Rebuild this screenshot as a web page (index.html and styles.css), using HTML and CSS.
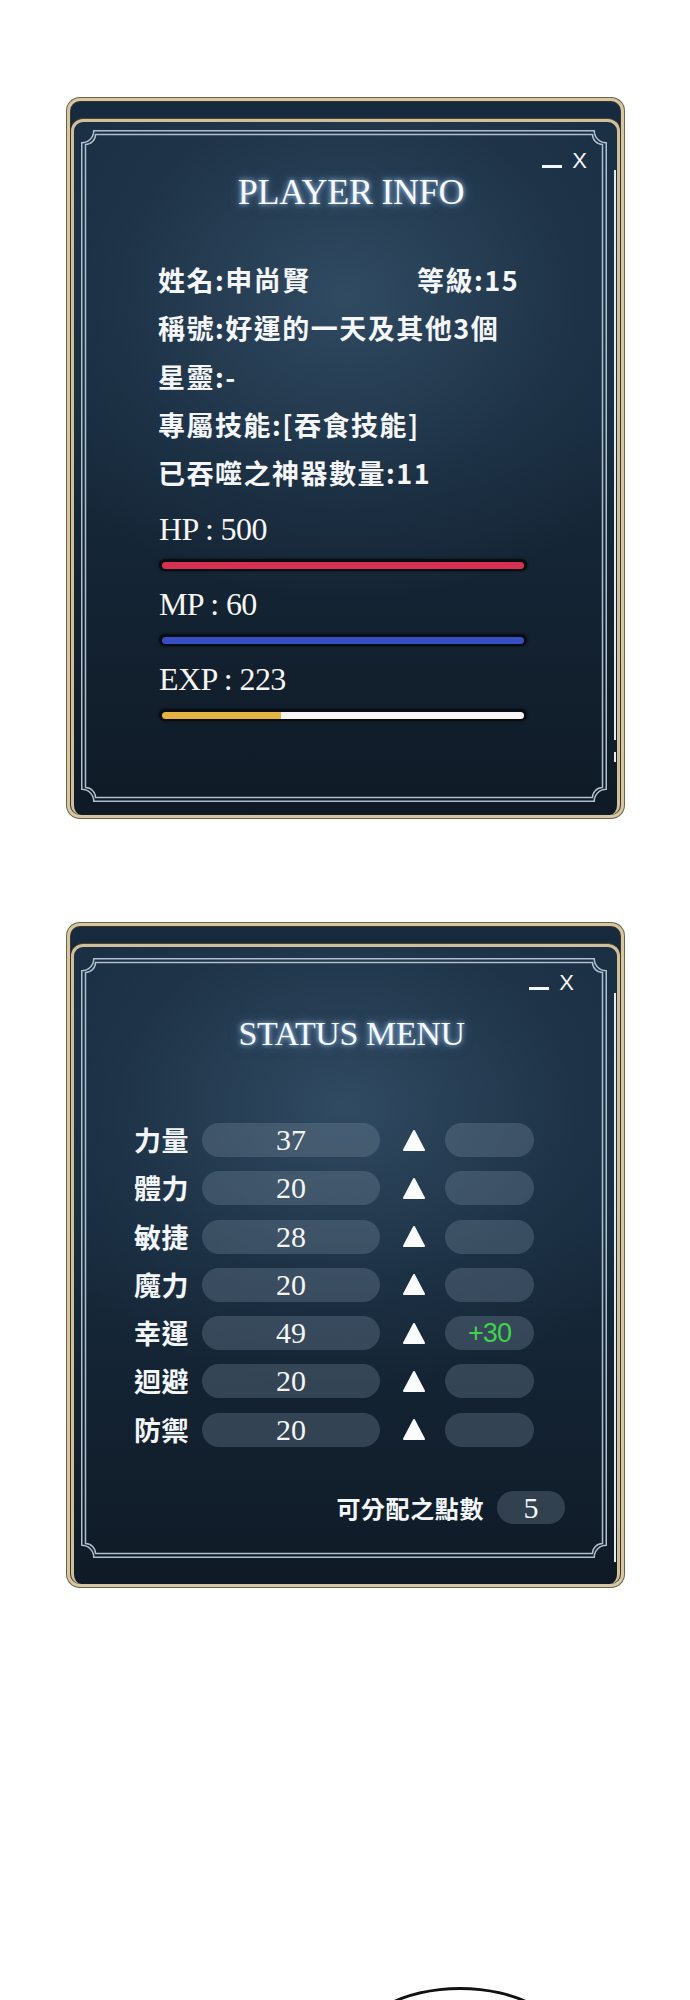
FILE: index.html
```html
<!DOCTYPE html>
<html lang="zh-Hant">
<head>
  <meta charset="UTF-8" />
  <meta name="viewport" content="width=device-width, initial-scale=1.0" />
  <title>Player Info / Status Menu</title>
  <link rel="stylesheet" href="styles.css">
</head>
<body>
  <main class="page">

    <section class="window window-info">
      <div class="window-face">
        <div class="scroll-line"></div>
        <div class="scroll-tick"></div>
        <div class="frame frame-info">
          <svg class="frame-lines" width="526" height="672" viewBox="0 0 526 672">
            <path d="M12.75 0.75 H513.25 A12 12 0 0 0 525.25 12.75 V659.25 A12 12 0 0 0 513.25 671.25 H12.75 A12 12 0 0 0 0.75 659.25 V12.75 A12 12 0 0 0 12.75 0.75 Z" />
            <path d="M14.5 4.5 H511.5 A10 10 0 0 0 521.5 14.5 V657.5 A10 10 0 0 0 511.5 667.5 H14.5 A10 10 0 0 0 4.5 657.5 V14.5 A10 10 0 0 0 14.5 4.5 Z" />
          </svg>

          <div class="win-controls">
            <span class="win-min"></span>
            <span class="win-close">X</span>
          </div>
          <h1 class="win-title">PLAYER INFO</h1>

          <div class="info-list">
            <div class="info-row info-row-split"><span>姓名:申尚賢</span><span>等級:15</span></div>
            <div class="info-row">稱號:好運的一天及其他3個</div>
            <div class="info-row">星靈:-</div>
            <div class="info-row">專屬技能:[吞食技能]</div>
            <div class="info-row">已吞噬之神器數量:11</div>
          </div>

          <div class="gauges">
            <div class="gauge">
              <div class="gauge-label">HP : 500</div>
              <div class="bar"><span class="bar-fill bar-hp" style="width: 100%"></span></div>
            </div>
            <div class="gauge">
              <div class="gauge-label">MP : 60</div>
              <div class="bar"><span class="bar-fill bar-mp" style="width: 100%"></span></div>
            </div>
            <div class="gauge">
              <div class="gauge-label">EXP : 223</div>
              <div class="bar bar-empty"><span class="bar-fill bar-exp" style="width: 33%"></span></div>
            </div>
          </div>
        </div>
      </div>
    </section>

    <section class="window window-status">
      <div class="window-face">
        <div class="scroll-line"></div>
        <div class="frame frame-status">
          <svg class="frame-lines" width="526" height="600" viewBox="0 0 526 600">
            <path d="M12.75 0.75 H513.25 A12 12 0 0 0 525.25 12.75 V587.25 A12 12 0 0 0 513.25 599.25 H12.75 A12 12 0 0 0 0.75 587.25 V12.75 A12 12 0 0 0 12.75 0.75 Z" />
            <path d="M14.5 4.5 H511.5 A10 10 0 0 0 521.5 14.5 V585.5 A10 10 0 0 0 511.5 595.5 H14.5 A10 10 0 0 0 4.5 585.5 V14.5 A10 10 0 0 0 14.5 4.5 Z" />
          </svg>

          <div class="win-controls">
            <span class="win-min"></span>
            <span class="win-close">X</span>
          </div>
          <h1 class="win-title">STATUS MENU</h1>

          <div class="stat-list">
            <div class="stat-row">
              <span class="stat-name">力量</span><span class="pill stat-value">37</span>
              <svg class="stat-up" width="24" height="23" viewBox="0 0 24 23"><polygon points="12,2 22,21 2,21" /></svg>
              <span class="pill stat-bonus"></span>
            </div>
            <div class="stat-row">
              <span class="stat-name">體力</span><span class="pill stat-value">20</span>
              <svg class="stat-up" width="24" height="23" viewBox="0 0 24 23"><polygon points="12,2 22,21 2,21" /></svg>
              <span class="pill stat-bonus"></span>
            </div>
            <div class="stat-row">
              <span class="stat-name">敏捷</span><span class="pill stat-value">28</span>
              <svg class="stat-up" width="24" height="23" viewBox="0 0 24 23"><polygon points="12,2 22,21 2,21" /></svg>
              <span class="pill stat-bonus"></span>
            </div>
            <div class="stat-row">
              <span class="stat-name">魔力</span><span class="pill stat-value">20</span>
              <svg class="stat-up" width="24" height="23" viewBox="0 0 24 23"><polygon points="12,2 22,21 2,21" /></svg>
              <span class="pill stat-bonus"></span>
            </div>
            <div class="stat-row">
              <span class="stat-name">幸運</span><span class="pill stat-value">49</span>
              <svg class="stat-up" width="24" height="23" viewBox="0 0 24 23"><polygon points="12,2 22,21 2,21" /></svg>
              <span class="pill stat-bonus">+30</span>
            </div>
            <div class="stat-row">
              <span class="stat-name">迴避</span><span class="pill stat-value">20</span>
              <svg class="stat-up" width="24" height="23" viewBox="0 0 24 23"><polygon points="12,2 22,21 2,21" /></svg>
              <span class="pill stat-bonus"></span>
            </div>
            <div class="stat-row">
              <span class="stat-name">防禦</span><span class="pill stat-value">20</span>
              <svg class="stat-up" width="24" height="23" viewBox="0 0 24 23"><polygon points="12,2 22,21 2,21" /></svg>
              <span class="pill stat-bonus"></span>
            </div>
          </div>

          <div class="points">
            <span class="points-label">可分配之點數</span>
            <span class="pill points-value">5</span>
          </div>
        </div>
      </div>
    </section>

    <div class="bubble"></div>
  </main>
</body>
</html>
```

FILE: styles.css
```css
body {
  margin: 0;
  padding: 0;
  background: #ffffff;
  font-family: "Noto Sans CJK TC", "Noto Sans", sans-serif;
  color: #f3f6f8;
}
.page {
  width: 690px;
  height: 2000px;
  padding-top: 98px;
  box-sizing: border-box;
  overflow: hidden;
}

/* window shell: back tab + front face */
.window {
  width: 551px;
  margin-left: 67px;
  border: 3px solid #d5c7a3;
  border-radius: 13px;
  box-shadow: 0 0 0 1px #6f6149, inset 0 0 0 1px #3b3426;
  background: #182b3e;
  padding-top: 18px;
}
.window-status {
  margin-top: 105px;
}
.window-face {
  position: relative;
  margin: 0 1px;
  border: 3px solid #cfc09b;
  border-bottom: none;
  border-radius: 12px 12px 10px 10px;
  box-shadow: 0 -1px 0 #4c4332;
  background:
    radial-gradient(ellipse 85% 55% at 50% 25%, rgba(52, 80, 104, 0.85) 0%, rgba(36, 58, 80, 0.5) 50%, rgba(20, 34, 48, 0) 80%),
    linear-gradient(#1a2e42 0%, #172a3c 45%, #0f1a26 100%);
  padding: 8px 10px 13px 7px;
}
.window-status .window-face {
  padding-top: 11px;
  padding-bottom: 26px;
}

.scroll-line {
  position: absolute;
  right: 1px;
  top: 48px;
  width: 2px;
  height: 570px;
  background: #e6edf2;
}
.scroll-tick {
  position: absolute;
  right: 1px;
  top: 630px;
  width: 2px;
  height: 10px;
  background: #e6edf2;
}
.window-status .scroll-line {
  top: 46px;
  height: 569px;
}

/* double line frame */
.frame {
  position: relative;
  width: 526px;
  box-sizing: border-box;
}
.frame-info {
  height: 672px;
  padding: 20px 20px 0 78px;
}
.frame-status {
  height: 600px;
  padding: 14px 33px 0 53px;
}
.frame-lines {
  position: absolute;
  left: 0;
  top: 0;
  fill: none;
  stroke: #b0bfcd;
  stroke-width: 1.5;
}

.win-controls {
  display: flex;
  justify-content: flex-end;
  align-items: flex-end;
  gap: 10px;
  height: 22px;
  font-family: "Liberation Sans", Arial, sans-serif;
  font-size: 22px;
  line-height: 22px;
  color: #f4f7fa;
}
.win-min {
  width: 20px;
  height: 3px;
  margin-bottom: 4px;
  background: #f4f7fa;
}

.win-title {
  position: relative;
  left: 17px;
  margin: 0 0 0 -78px;
  text-align: center;
  font-family: "Liberation Serif", "Times New Roman", serif;
  font-weight: normal;
  font-size: 36px;
  line-height: 40px;
  letter-spacing: -0.3px;
  color: #f5f9fc;
  text-shadow: 0 0 5px rgba(180, 215, 255, 0.85), 0 0 12px rgba(120, 170, 230, 0.55);
}
.frame-status .win-title {
  left: 24px;
  margin: 20px 0 0 -53px;
  font-size: 34px;
  letter-spacing: -0.4px;
}

/* player info */
.info-list {
  margin-top: 44px;
  margin-left: -1px;
}
.info-row {
  font-size: 27px;
  font-weight: 700;
  line-height: 48.3px;
  letter-spacing: 1.5px;
  color: #f4f6f8;
  white-space: nowrap;
}
.info-row-split {
  display: grid;
  grid-template-columns: 259px auto;
}

.gauges {
  margin-top: 14px;
  width: 368px;
  display: flex;
  flex-direction: column;
  gap: 15.4px;
}
.gauge-label {
  font-family: "Liberation Serif", "Times New Roman", serif;
  font-size: 32px;
  line-height: 36px;
  letter-spacing: -0.6px;
  margin-bottom: 11.6px;
  color: #f6f6f4;
}
.bar {
  height: 12px;
  box-sizing: border-box;
  padding: 2.5px 3px;
  border-radius: 6px;
  background: #080d13;
  box-shadow: 0 0 3px rgba(0, 0, 0, 0.6);
  display: flex;
}
.bar-fill {
  display: block;
  height: 7px;
  border-radius: 4px;
}
.bar-hp { background: #d63150; }
.bar-mp { background: #3650c4; }
.bar-exp {
  background: #e3b343;
  border-radius: 4px 0 0 4px;
}
.bar-empty::after {
  content: "";
  flex: 1;
  height: 7px;
  border-radius: 0 4px 4px 0;
  background: #f5f5f3;
}

/* status menu */
.stat-list {
  margin-top: 69px;
  display: flex;
  flex-direction: column;
  gap: 14.3px;
}
.stat-row {
  display: flex;
  align-items: center;
  height: 34px;
}
.stat-name {
  width: 68px;
  font-size: 27px;
  font-weight: 700;
  line-height: 34px;
  letter-spacing: 0.5px;
}
.pill {
  display: block;
  height: 34px;
  border-radius: 17px;
  background: rgba(120, 140, 160, 0.32);
  text-align: center;
  font-family: "Liberation Serif", "Times New Roman", serif;
  font-size: 30px;
  line-height: 34px;
  color: #f4f6f6;
}
.stat-value {
  width: 178px;
}
.stat-up {
  margin-left: 22px;
  fill: #fbfcfd;
  stroke: #fbfcfd;
  stroke-width: 2;
  stroke-linejoin: round;
}
.stat-bonus {
  width: 89px;
  margin-left: 19px;
  font-family: "Liberation Sans", Arial, sans-serif;
  font-size: 27px;
  color: #3ed24a;
  letter-spacing: -1px;
}

.points {
  margin-top: 43px;
  display: flex;
  justify-content: flex-end;
  align-items: center;
  gap: 13px;
  padding-right: 9px;
}
.points-label {
  font-size: 24px;
  font-weight: 700;
  letter-spacing: 0.6px;
}
.points-value {
  width: 68px;
  height: 33px;
  line-height: 33px;
}

.bubble {
  width: 212px;
  height: 120px;
  margin: 400px 0 0 354px;
  box-sizing: border-box;
  border: 3px solid #111;
  border-radius: 50%;
}
```
